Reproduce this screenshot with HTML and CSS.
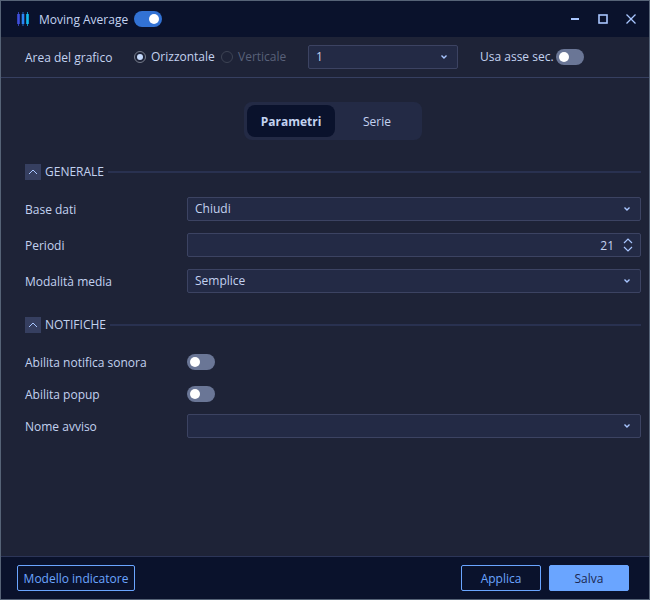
FILE: index.html
```html
<!DOCTYPE html>
<html lang="it">
<head>
    <meta charset="UTF-8">
    <meta name="viewport" content="width=device-width, initial-scale=1.0">
    <title>Moving Average</title>
    <link rel="stylesheet" href="styles.css">
</head>
<body>
    <form class="window">
        <header class="titlebar">
            <svg class="logo" width="14" height="16" viewBox="0 0 14 16">
                <path d="M2.500 1v14" stroke="#3340b0"/>
                <path d="M2.500 3v10" stroke="#3f50e0" stroke-width="2.600"/>
                <path d="M7 1v14" stroke="#2468c0"/>
                <path d="M7 3v10" stroke="#2b86f5" stroke-width="2.600"/>
                <path d="M11.500 1v14" stroke="#1590c0"/>
                <path d="M11.500 3v10" stroke="#12bdf0" stroke-width="2.600"/>
            </svg>
            <label class="title" for="active">Moving Average</label>
            <input type="checkbox" class="toggle" id="active" checked>
            <div class="window-buttons">
                <button type="button" aria-label="Riduci">
                    <svg width="12" height="12" viewBox="0 0 12 12"><path d="M2 6h8" stroke-width="2"/></svg>
                </button>
                <button type="button" aria-label="Ingrandisci">
                    <svg width="12" height="12" viewBox="0 0 12 12"><rect x="2" y="2" width="8" height="8" stroke-width="1.600"/></svg>
                </button>
                <button type="button" aria-label="Chiudi">
                    <svg width="12" height="12" viewBox="0 0 12 12"><path d="M1.500 1.500l9 9M10.500 1.500l-9 9" stroke-width="1.300"/></svg>
                </button>
            </div>
        </header>

        <div class="toolbar">
            <span class="area-label">Area del grafico</span>
            <label class="radio"><input type="radio" name="area" checked>Orizzontale</label>
            <label class="radio disabled"><input type="radio" name="area" disabled>Verticale</label>
            <div class="field area-number">
                <select aria-label="Numero area"><option>1</option></select>
                <svg class="arrow" width="8" height="8" viewBox="0 0 8 8"><path d="M1.500 2.500l2.500 2.500l2.500-2.500"/></svg>
            </div>
            <label class="axis">Usa asse sec.<input type="checkbox" class="toggle"></label>
        </div>

        <main class="content">
            <div class="tabs" role="tablist">
                <button type="button" class="tab selected" role="tab" aria-selected="true">Parametri</button>
                <button type="button" class="tab" role="tab" aria-selected="false">Serie</button>
            </div>

            <section class="group">
                <h2 class="group-header">
                    <button type="button" class="collapse" aria-label="Comprimi">
                        <svg width="10" height="8" viewBox="0 0 10 8"><path d="M1 6l4-4l4 4"/></svg>
                    </button>
                    GENERALE
                </h2>
                <div class="rows">
                    <div class="row">
                        <label for="base">Base dati</label>
                        <div class="field">
                            <select id="base"><option>Chiudi</option></select>
                            <svg class="arrow" width="8" height="8" viewBox="0 0 8 8"><path d="M1.500 2.500l2.500 2.500l2.500-2.500"/></svg>
                        </div>
                    </div>
                    <div class="row">
                        <label for="periods">Periodi</label>
                        <div class="field">
                            <input type="number" id="periods" value="21">
                            <svg class="arrow spinner" width="10" height="14" viewBox="0 0 10 14"><path d="M1 5l4-4l4 4M1 9l4 4l4-4"/></svg>
                        </div>
                    </div>
                    <div class="row">
                        <label for="mode">Modalità media</label>
                        <div class="field">
                            <select id="mode"><option>Semplice</option></select>
                            <svg class="arrow" width="8" height="8" viewBox="0 0 8 8"><path d="M1.500 2.500l2.500 2.500l2.500-2.500"/></svg>
                        </div>
                    </div>
                </div>
            </section>

            <section class="group">
                <h2 class="group-header">
                    <button type="button" class="collapse" aria-label="Comprimi">
                        <svg width="10" height="8" viewBox="0 0 10 8"><path d="M1 6l4-4l4 4"/></svg>
                    </button>
                    NOTIFICHE
                </h2>
                <div class="rows compact">
                    <div class="row">
                        <label for="sound">Abilita notifica sonora</label>
                        <input type="checkbox" class="toggle" id="sound">
                    </div>
                    <div class="row">
                        <label for="popup">Abilita popup</label>
                        <input type="checkbox" class="toggle" id="popup">
                    </div>
                    <div class="row">
                        <label for="alert">Nome avviso</label>
                        <div class="field">
                            <select id="alert"><option></option></select>
                            <svg class="arrow" width="8" height="8" viewBox="0 0 8 8"><path d="M1.500 2.500l2.500 2.500l2.500-2.500"/></svg>
                        </div>
                    </div>
                </div>
            </section>
        </main>

        <footer class="footer">
            <button type="button" class="btn template">Modello indicatore</button>
            <button type="button" class="btn">Applica</button>
            <button type="submit" class="btn primary">Salva</button>
        </footer>
    </form>
</body>
</html>
```

FILE: styles.css
```css
* {
    box-sizing: border-box;
}

body {
    margin: 0;
    background-color: #1e2337;
    color: #c3d2f0;
    font-family: "Open Sans", "Noto Sans", sans-serif;
    font-size: 12px;
    line-height: 18px;
}

button,
input,
select {
    margin: 0;
    padding: 0;
    border: none;
    background: none;
    color: inherit;
    font: inherit;
}

button {
    cursor: pointer;
}

svg {
    fill: none;
    stroke: #a9c6ff;
}

.window {
    display: flex;
    flex-direction: column;
    min-height: 100vh;
    border: 1px solid #566377;
}

/* title bar */
.titlebar {
    display: flex;
    align-items: center;
    height: 36px;
    padding: 0 4px 0 15px;
    background-color: #0a122c;
}

.title {
    margin: 0 6px 0 9px;
    padding-top: 2px;
}

.window-buttons {
    display: flex;
    margin-left: auto;
}

.window-buttons button {
    display: grid;
    place-items: center;
    width: 28px;
    height: 28px;
}

/* switches */
.toggle {
    appearance: none;
    display: flex;
    align-items: center;
    flex: none;
    width: 28px;
    height: 16px;
    padding: 0 3px;
    border-radius: 8px;
    background-color: #6a7696;
    cursor: pointer;
}

.toggle::before {
    content: "";
    width: 10px;
    height: 10px;
    border-radius: 50%;
    background-color: #fff;
}

.toggle:checked {
    justify-content: flex-end;
    background-color: #3272d4;
}

/* toolbar */
.toolbar {
    display: flex;
    align-items: center;
    height: 41px;
    padding-left: 24px;
    border-bottom: 1px solid #363f60;
}

.area-label {
    width: 109px;
    padding-top: 2px;
}

.radio {
    display: flex;
    align-items: center;
    gap: 5px;
    width: 87px;
}

.radio input {
    appearance: none;
    display: grid;
    place-items: center;
    width: 12px;
    height: 12px;
    border: 1px solid #777d8c;
    border-radius: 50%;
}

.radio input:checked::before {
    content: "";
    width: 6px;
    height: 6px;
    border-radius: 50%;
    background-color: #c6dafc;
}

.radio.disabled {
    color: #596179;
}

.radio.disabled input {
    border-color: #3d4354;
}

.axis {
    display: flex;
    align-items: center;
    gap: 2px;
    margin-left: 22px;
}

/* drop-downs and number box */
.field {
    display: grid;
    align-items: center;
    height: 24px;
    border: 1px solid #3c4362;
    border-radius: 2px;
    background-color: #232a45;
}

.field > * {
    grid-area: 1 / 1;
}

.field select,
.field input {
    appearance: none;
    width: 100%;
    height: 22px;
    padding: 0 26px 0 7px;
    outline: none;
}

.field input {
    appearance: textfield;
    text-align: right;
}

.field input::-webkit-inner-spin-button {
    display: none;
}

.arrow {
    justify-self: end;
    margin-right: 9px;
    stroke-width: 1.4;
    pointer-events: none;
}

.arrow.spinner {
    margin-right: 7px;
    stroke-width: 1.2;
}

.area-number {
    width: 150px;
}

/* content */
.content {
    flex: 1;
    padding: 24px 8px 24px 24px;
}

.tabs {
    display: grid;
    grid-template-columns: 88px 1fr;
    width: 178px;
    height: 38px;
    margin: 0 auto 24px;
    padding: 3px;
    border-radius: 8px;
    background-color: #232a45;
}

.tab {
    padding-top: 2px;
    border-radius: 8px;
}

.tab.selected {
    background-color: #0a122c;
    font-weight: bold;
}

.group {
    margin-bottom: 24px;
}

.group-header {
    display: flex;
    align-items: center;
    gap: 4px;
    height: 16px;
    margin: 0 0 17px;
    font-size: 12px;
    font-weight: normal;
}

.group-header::after {
    content: "";
    flex: 1;
    height: 2px;
    background-color: #293150;
}

.collapse {
    display: grid;
    place-items: center;
    width: 16px;
    height: 16px;
    background-color: #363f60;
}

.rows {
    display: grid;
    gap: 12px;
}

.rows.compact {
    gap: 8px;
}

.row {
    display: grid;
    grid-template-columns: 162px 1fr;
    align-items: center;
    min-height: 24px;
}

.row label {
    padding-top: 2px;
}

/* footer */
.footer {
    display: flex;
    gap: 8px;
    padding: 8px 20px 8px 16px;
    border-top: 1px solid #2c3558;
    background-color: #0a122c;
}

.btn {
    width: 80px;
    height: 26px;
    padding-top: 2px;
    border: 1px solid #6aa5ff;
    border-radius: 2px;
    color: #6aa5ff;
}

.btn.template {
    width: 118px;
    margin-right: auto;
}

.btn.primary {
    background-color: #6aa5ff;
    color: #1b2750;
}
```
